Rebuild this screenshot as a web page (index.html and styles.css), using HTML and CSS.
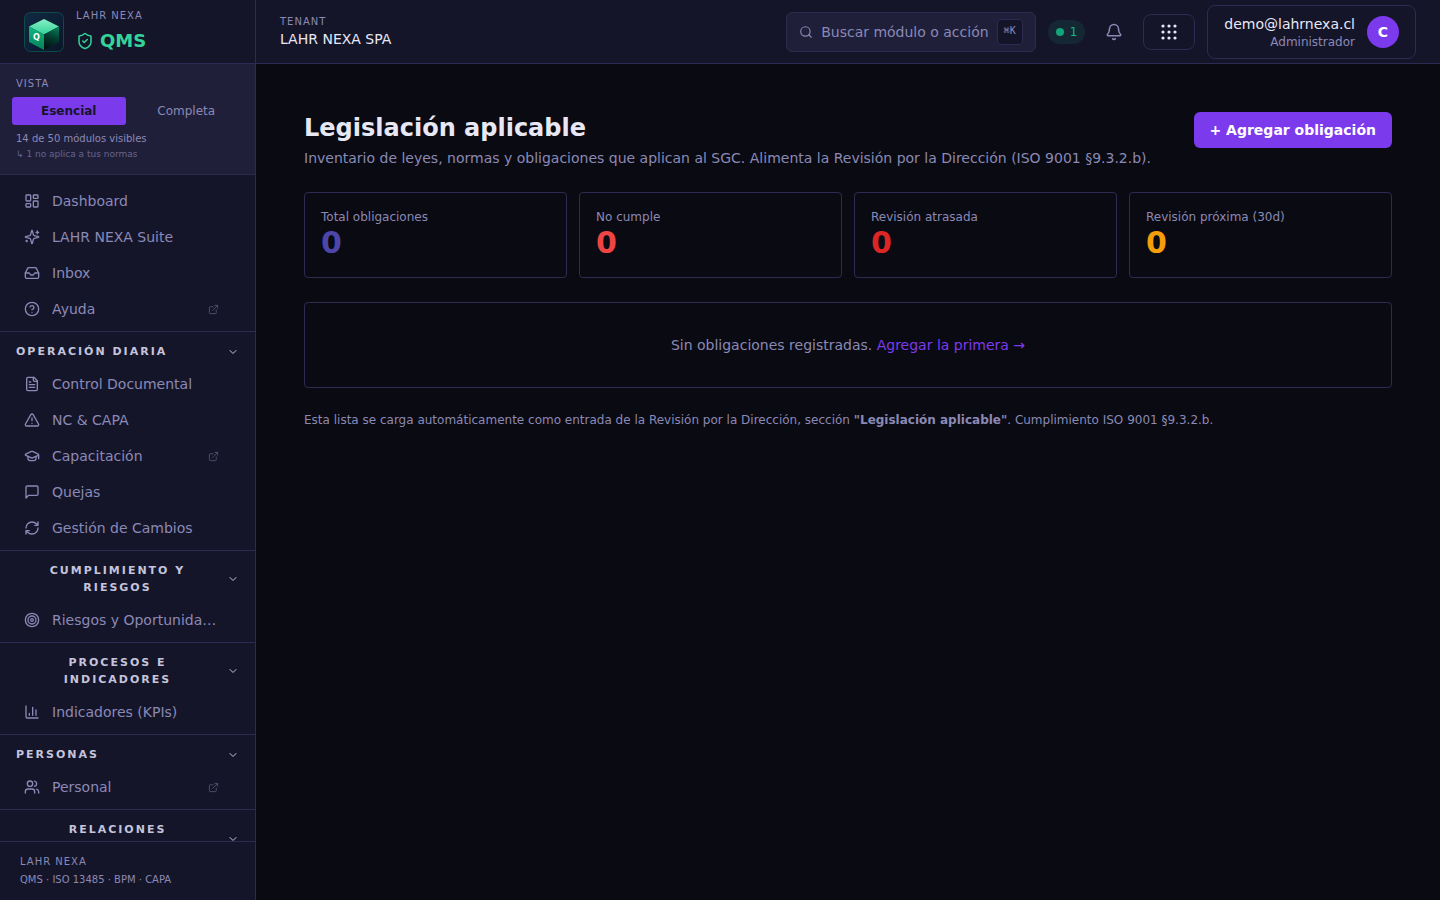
FILE: index.html
```html
<!DOCTYPE html>
<html lang="es">
<head>
<meta charset="utf-8">
<meta name="viewport" content="width=device-width, initial-scale=1">
<title>Legislación aplicable · QMS</title>
<link rel="stylesheet" href="styles.css">
</head>
<body>
<svg class="sprite" aria-hidden="true">
  <symbol id="external" viewBox="0 0 24 24"><path d="M15 3h6v6M10 14 21 3M18 13v6a2 2 0 0 1-2 2H5a2 2 0 0 1-2-2V8a2 2 0 0 1 2-2h6"/></symbol>
  <symbol id="chevron" viewBox="0 0 24 24"><path d="m6 9 6 6 6-6"/></symbol>
</svg>
<div class="app">
  <aside class="sidebar">
    <div class="brand">
      <svg class="logo" viewBox="0 0 40 40" role="img" aria-label="QMS">
        <defs>
          <linearGradient id="bg" x1="0" y1="0" x2="1" y2="1"><stop offset="0" stop-color="#102a43"/><stop offset="1" stop-color="#0a1628"/></linearGradient>
          <linearGradient id="top" x1="0" y1="0" x2="0" y2="1"><stop offset="0" stop-color="#86efc5"/><stop offset="1" stop-color="#34d399"/></linearGradient>
          <linearGradient id="left" x1="0" y1="0" x2="0" y2="1"><stop offset="0" stop-color="#10b981"/><stop offset="1" stop-color="#058058"/></linearGradient>
          <linearGradient id="right" x1="0.7" y1="0" x2="0.4" y2="1"><stop offset="0" stop-color="#067a55"/><stop offset="0.5" stop-color="#033a2d"/><stop offset="1" stop-color="#020f12"/></linearGradient>
        </defs>
        <rect x="0.5" y="0.5" width="39" height="39" rx="6" fill="url(#bg)" stroke="#0d4a4b"/>
        <path d="M20 7 35 14.500 20 22.500 5 14.500z" fill="url(#top)"/>
        <path d="M5 14.500 20 22.500V38L5 30z" fill="url(#left)"/>
        <path d="M35 14.500 20 22.500V38l15-8z" fill="url(#right)"/>
        <text x="12.500" y="28" text-anchor="middle" class="logo-letter">Q</text>
      </svg>
      <div class="brand-text">
        <span class="eyebrow">LAHR NEXA</span>
        <span class="product"><svg class="icon" viewBox="0 0 24 24"><path d="M20 13c0 5-3.500 7.500-7.660 8.950a1 1 0 0 1-.67-.01C7.500 20.500 4 18 4 13V6a1 1 0 0 1 1-1c2 0 4.500-1.200 6.240-2.720a1.170 1.170 0 0 1 1.520 0C14.510 3.810 17 5 19 5a1 1 0 0 1 1 1z"/><path d="m9 12 2 2 4-4"/></svg>QMS</span>
      </div>
    </div>
    <section class="view">
      <span class="eyebrow">VISTA</span>
      <div class="view-tabs">
        <button class="tab tab-active" type="button">Esencial</button>
        <button class="tab" type="button">Completa</button>
      </div>
      <p class="view-count">14 de 50 módulos visibles</p>
      <p class="view-hint">↳ 1 no aplica a tus normas</p>
    </section>
    <nav class="nav">
      <div class="group">
        <a class="item" href="#"><svg class="icon" viewBox="0 0 24 24"><rect width="7" height="9" x="3" y="3" rx="1"/><rect width="7" height="5" x="14" y="3" rx="1"/><rect width="7" height="9" x="14" y="12" rx="1"/><rect width="7" height="5" x="3" y="16" rx="1"/></svg><span class="label">Dashboard</span></a>
        <a class="item" href="#"><svg class="icon" viewBox="0 0 24 24"><path d="M9.937 15.500A2 2 0 0 0 8.500 14.063l-6.135-1.582a.5.5 0 0 1 0-.962L8.500 9.936A2 2 0 0 0 9.937 8.500l1.582-6.135a.5.5 0 0 1 .963 0L14.063 8.500A2 2 0 0 0 15.500 9.937l6.135 1.581a.5.5 0 0 1 0 .964L15.500 14.063a2 2 0 0 0-1.437 1.437l-1.582 6.135a.5.5 0 0 1-.963 0zM20 3v4M22 5h-4M4 17v2M5 18H3"/></svg><span class="label">LAHR NEXA Suite</span></a>
        <a class="item" href="#"><svg class="icon" viewBox="0 0 24 24"><path d="M22 12h-6l-2 3h-4l-2-3H2"/><path d="M5.450 5.110 2 12v6a2 2 0 0 0 2 2h16a2 2 0 0 0 2-2v-6l-3.450-6.890A2 2 0 0 0 16.760 4H7.240a2 2 0 0 0-1.790 1.110z"/></svg><span class="label">Inbox</span></a>
        <a class="item" href="#"><svg class="icon" viewBox="0 0 24 24"><circle cx="12" cy="12" r="10"/><path d="M9.090 9a3 3 0 0 1 5.830 1c0 2-3 3-3 3M12 17h.01"/></svg><span class="label">Ayuda</span><svg class="icon ext"><use href="#external"/></svg></a>
      </div>
      <div class="group">
        <button class="head" type="button"><span>OPERACIÓN DIARIA</span><svg class="icon chev"><use href="#chevron"/></svg></button>
        <a class="item" href="#"><svg class="icon" viewBox="0 0 24 24"><path d="M15 2H6a2 2 0 0 0-2 2v16a2 2 0 0 0 2 2h12a2 2 0 0 0 2-2V7z"/><path d="M14 2v4a2 2 0 0 0 2 2h4M10 9H8M16 13H8M16 17H8"/></svg><span class="label">Control Documental</span></a>
        <a class="item" href="#"><svg class="icon" viewBox="0 0 24 24"><path d="m21.730 18-8-14a2 2 0 0 0-3.480 0l-8 14A2 2 0 0 0 4 21h16a2 2 0 0 0 1.730-3M12 9v4M12 17h.01"/></svg><span class="label">NC &amp; CAPA</span></a>
        <a class="item" href="#"><svg class="icon" viewBox="0 0 24 24"><path d="M21.420 10.922a1 1 0 0 0-.019-1.838L12.830 5.180a2 2 0 0 0-1.660 0L2.600 9.080a1 1 0 0 0 0 1.832l8.570 3.908a2 2 0 0 0 1.660 0zM22 10v6"/><path d="M6 12.500V16a6 3 0 0 0 12 0v-3.500"/></svg><span class="label">Capacitación</span><svg class="icon ext"><use href="#external"/></svg></a>
        <a class="item" href="#"><svg class="icon" viewBox="0 0 24 24"><path d="M21 15a2 2 0 0 1-2 2H7l-4 4V5a2 2 0 0 1 2-2h14a2 2 0 0 1 2 2z"/></svg><span class="label">Quejas</span></a>
        <a class="item" href="#"><svg class="icon" viewBox="0 0 24 24"><path d="M3 12a9 9 0 0 1 9-9 9.750 9.750 0 0 1 6.740 2.740L21 8M21 3v5h-5M21 12a9 9 0 0 1-9 9 9.750 9.750 0 0 1-6.740-2.740L3 16M8 16H3v5"/></svg><span class="label">Gestión de Cambios</span></a>
      </div>
      <div class="group">
        <button class="head" type="button"><span>CUMPLIMIENTO Y RIESGOS</span><svg class="icon chev"><use href="#chevron"/></svg></button>
        <a class="item" href="#"><svg class="icon" viewBox="0 0 24 24"><circle cx="12" cy="12" r="10"/><circle cx="12" cy="12" r="6"/><circle cx="12" cy="12" r="2"/></svg><span class="label">Riesgos y Oportunida…</span></a>
      </div>
      <div class="group">
        <button class="head" type="button"><span>PROCESOS E INDICADORES</span><svg class="icon chev"><use href="#chevron"/></svg></button>
        <a class="item" href="#"><svg class="icon" viewBox="0 0 24 24"><path d="M3 3v16a2 2 0 0 0 2 2h16M18 17V9M13 17V5M8 17v-3"/></svg><span class="label">Indicadores (KPIs)</span></a>
      </div>
      <div class="group">
        <button class="head" type="button"><span>PERSONAS</span><svg class="icon chev"><use href="#chevron"/></svg></button>
        <a class="item" href="#"><svg class="icon" viewBox="0 0 24 24"><path d="M16 21v-2a4 4 0 0 0-4-4H6a4 4 0 0 0-4 4v2"/><circle cx="9" cy="7" r="4"/><path d="M22 21v-2a4 4 0 0 0-3-3.870M16 3.130a4 4 0 0 1 0 7.750"/></svg><span class="label">Personal</span><svg class="icon ext"><use href="#external"/></svg></a>
      </div>
      <div class="group">
        <button class="head head-tall" type="button"><span>RELACIONES</span><svg class="icon chev"><use href="#chevron"/></svg></button>
      </div>
    </nav>
    <footer class="side-foot">
      <span class="eyebrow">LAHR NEXA</span>
      <span>QMS · ISO 13485 · BPM · CAPA</span>
    </footer>
  </aside>
  <div class="content">
    <header class="topbar">
      <div class="tenant">
        <span class="eyebrow">TENANT</span>
        <span class="tenant-name">LAHR NEXA SPA</span>
      </div>
      <button class="search" type="button"><svg class="icon" viewBox="0 0 24 24"><circle cx="11" cy="11" r="8"/><path d="m21 21-4.300-4.300"/></svg><span>Buscar módulo o acción</span><kbd>⌘K</kbd></button>
      <span class="online"><i class="dot"></i>1</span>
      <button class="bell" type="button" aria-label="Notificaciones"><svg class="icon" viewBox="0 0 24 24"><path d="M10.268 21a2 2 0 0 0 3.464 0M3.262 15.326A1 1 0 0 0 4 17h16a1 1 0 0 0 .740-1.673C19.410 13.956 18 12.499 18 8A6 6 0 0 0 6 8c0 4.499-1.411 5.956-2.738 7.326"/></svg></button>
      <button class="apps" type="button" aria-label="Aplicaciones"><svg viewBox="0 0 20 20"><circle cx="4" cy="4" r="1.600"/><circle cx="10" cy="4" r="1.600"/><circle cx="16" cy="4" r="1.600"/><circle cx="4" cy="10" r="1.600"/><circle cx="10" cy="10" r="1.600"/><circle cx="16" cy="10" r="1.600"/><circle cx="4" cy="16" r="1.600"/><circle cx="10" cy="16" r="1.600"/><circle cx="16" cy="16" r="1.600"/></svg></button>
      <button class="user" type="button">
        <span class="user-text"><span class="user-mail">demo@lahrnexa.cl</span><span class="user-role">Administrador</span></span>
        <span class="avatar">C</span>
      </button>
    </header>
    <main class="main">
      <div class="page-head">
        <div>
          <h1>Legislación aplicable</h1>
          <p class="subtitle">Inventario de leyes, normas y obligaciones que aplican al SGC. Alimenta la Revisión por la Dirección (ISO 9001 §9.3.2.b).</p>
        </div>
        <button class="primary" type="button">+ Agregar obligación</button>
      </div>
      <div class="stats">
        <div class="card"><span class="stat-label">Total obligaciones</span><span class="stat-value indigo">0</span></div>
        <div class="card"><span class="stat-label">No cumple</span><span class="stat-value red">0</span></div>
        <div class="card"><span class="stat-label">Revisión atrasada</span><span class="stat-value crimson">0</span></div>
        <div class="card"><span class="stat-label">Revisión próxima (30d)</span><span class="stat-value amber">0</span></div>
      </div>
      <div class="empty">Sin obligaciones registradas. <a href="#">Agregar la primera →</a></div>
      <p class="note">Esta lista se carga automáticamente como entrada de la Revisión por la Dirección, sección <strong>"Legislación aplicable"</strong>. Cumplimiento ISO 9001 §9.3.2.b.</p>
    </main>
  </div>
</div>
</body>
</html>
```
FILE: styles.css
```css
:root {
  --bg: #0a0a12;
  --surface: #15152a;
  --raised: #1f1f3a;
  --border: #2d2b52;
  --muted: #8b89b5;
  --text: #e8e8f5;
  --accent: #7c3aed;
}

* { box-sizing: border-box; }

body {
  margin: 0;
  background: var(--bg);
  color: var(--text);
  font: 14px/20px "DejaVu Sans", sans-serif;
}

p, h1 { margin: 0; }
a { color: inherit; text-decoration: none; }

button {
  margin: 0;
  padding: 0;
  border: 0;
  background: none;
  color: inherit;
  font: inherit;
  cursor: pointer;
}

.sprite { display: none; }

.icon {
  flex: none;
  width: 16px;
  height: 16px;
  fill: none;
  stroke: currentColor;
  stroke-width: 2;
  stroke-linecap: round;
  stroke-linejoin: round;
}

.eyebrow {
  color: var(--muted);
  font-size: 10px;
  line-height: 15px;
  letter-spacing: 1px;
}

.app {
  display: grid;
  grid-template-columns: 256px minmax(0, 1fr);
  height: 100vh;
}

/* Sidebar */
.sidebar {
  display: flex;
  flex-direction: column;
  min-height: 0;
  background: var(--surface);
  border-right: 1px solid var(--border);
}

.brand {
  display: flex;
  flex: none;
  align-items: center;
  gap: 12px;
  height: 64px;
  padding: 0 24px;
  border-bottom: 1px solid var(--border);
}

.logo { width: 40px; height: 40px; }
.logo-letter { fill: #fff; font: bold 8px "DejaVu Sans", sans-serif; }

.brand-text { display: flex; flex-direction: column; gap: 4px; }

.product {
  display: flex;
  align-items: center;
  gap: 6px;
  color: #34d399;
  font-size: 18px;
  font-weight: 700;
  line-height: 28px;
}

.product .icon { width: 18px; height: 18px; }

.view {
  flex: none;
  display: flex;
  flex-direction: column;
  padding: 12px 12px 11px;
  background: var(--raised);
  border-bottom: 1px solid var(--border);
}

.view > .eyebrow, .view > p { padding: 0 4px; }

.view-tabs {
  display: grid;
  grid-template-columns: 1fr 1fr;
  gap: 4px;
  margin: 6px 0;
}

.tab {
  padding: 6px 8px;
  border-radius: 3px;
  color: var(--muted);
  font-size: 12px;
  line-height: 16px;
}

.tab-active { background: var(--accent); color: #15152a; font-weight: 700; }

.view-count { color: var(--muted); font-size: 10px; line-height: 15px; }
.view-hint { color: #66648c; font-size: 9px; line-height: 17px; }

.nav { flex: 1; min-height: 0; overflow: hidden; padding-top: 8px; }

.group { padding-bottom: 4px; }
.group + .group { border-top: 1px solid var(--border); }

.item {
  display: flex;
  align-items: center;
  gap: 12px;
  height: 36px;
  padding: 0 36px 0 24px;
  color: var(--muted);
}

.label {
  flex: 1;
  overflow: hidden;
  text-overflow: ellipsis;
  white-space: nowrap;
}

.icon.ext { width: 11px; height: 11px; opacity: 0.5; }

.head {
  display: flex;
  align-items: center;
  justify-content: space-between;
  gap: 8px;
  width: 100%;
  padding: 11px 16px 6px;
  color: #c5c4da;
  font-size: 11px;
  font-weight: 700;
  line-height: 17px;
  letter-spacing: 2px;
}

.icon.chev { width: 12px; height: 12px; }

.head-tall { min-height: 52px; }
.head-tall span { flex: 1; align-self: flex-start; }

.side-foot {
  flex: none;
  display: flex;
  flex-direction: column;
  gap: 3px;
  padding: 12px 20px;
  border-top: 1px solid var(--border);
  color: var(--muted);
  font-size: 10px;
  line-height: 16px;
}

/* Top bar */
.content { display: flex; flex-direction: column; min-width: 0; }

.topbar {
  display: flex;
  flex: none;
  align-items: center;
  gap: 12px;
  height: 64px;
  padding: 0 24px;
  background: var(--surface);
  border-bottom: 1px solid var(--border);
}

.tenant { display: flex; flex-direction: column; margin-right: auto; }

.search {
  display: flex;
  align-items: center;
  gap: 8px;
  height: 40px;
  padding: 0 12px;
  border: 1px solid var(--border);
  border-radius: 6px;
  background: var(--raised);
  color: var(--muted);
}

.search .icon { width: 14px; height: 14px; }

.search kbd {
  height: 26px;
  padding: 0 6px;
  border: 1px solid var(--border);
  border-radius: 4px;
  background: var(--surface);
  font: 10px/22px "DejaVu Sans Mono", monospace;
}

.online {
  display: flex;
  align-items: center;
  gap: 6px;
  padding: 4px 8px;
  border-radius: 12px;
  background: #152733;
  color: #10b981;
  font-size: 12px;
  line-height: 16px;
}

.dot { width: 8px; height: 8px; border-radius: 50%; background: #12a577; }

.bell { display: flex; padding: 8px; color: var(--muted); }
.bell .icon { width: 18px; height: 18px; }

.apps {
  display: flex;
  padding: 7px 15px;
  border: 1px solid var(--border);
  border-radius: 8px;
}

.apps svg { width: 20px; height: 20px; fill: var(--text); }

.user {
  display: flex;
  align-items: center;
  gap: 12px;
  padding: 8px 16px;
  border: 1px solid var(--border);
  border-radius: 8px;
  text-align: right;
}

.user-text { display: flex; flex-direction: column; }
.user-role { color: var(--muted); font-size: 12px; line-height: 16px; }

.avatar {
  width: 32px;
  border-radius: 50%;
  background: var(--accent);
  color: #fff;
  font-weight: 700;
  line-height: 32px;
  text-align: center;
}

/* Page */
.main {
  display: flex;
  flex-direction: column;
  gap: 24px;
  padding: 48px;
}

.page-head {
  display: flex;
  align-items: flex-start;
  justify-content: space-between;
  gap: 16px;
}

h1 { font-size: 24px; line-height: 32px; }
.subtitle { margin-top: 4px; color: var(--muted); }

.primary {
  flex: none;
  padding: 8px 16px;
  border-radius: 6px;
  background: var(--accent);
  color: #fff;
  font-weight: 700;
}

.stats { display: grid; grid-template-columns: repeat(4, 1fr); gap: 12px; }

.card, .empty { border: 1px solid var(--border); border-radius: 4px; }
.card { display: flex; flex-direction: column; padding: 16px 16px 17px; }

.stat-label { color: var(--muted); font-size: 12px; line-height: 16px; }
.stat-value { font-size: 30px; font-weight: 700; line-height: 35px; }

.indigo { color: #4c46a8; }
.red { color: #ef4444; }
.crimson { color: #dc2626; }
.amber { color: #f59e0b; }

.empty { padding: 32px; color: var(--muted); text-align: center; }
.empty a { color: var(--accent); }

.note { color: var(--muted); font-size: 12px; line-height: 16px; }
```
